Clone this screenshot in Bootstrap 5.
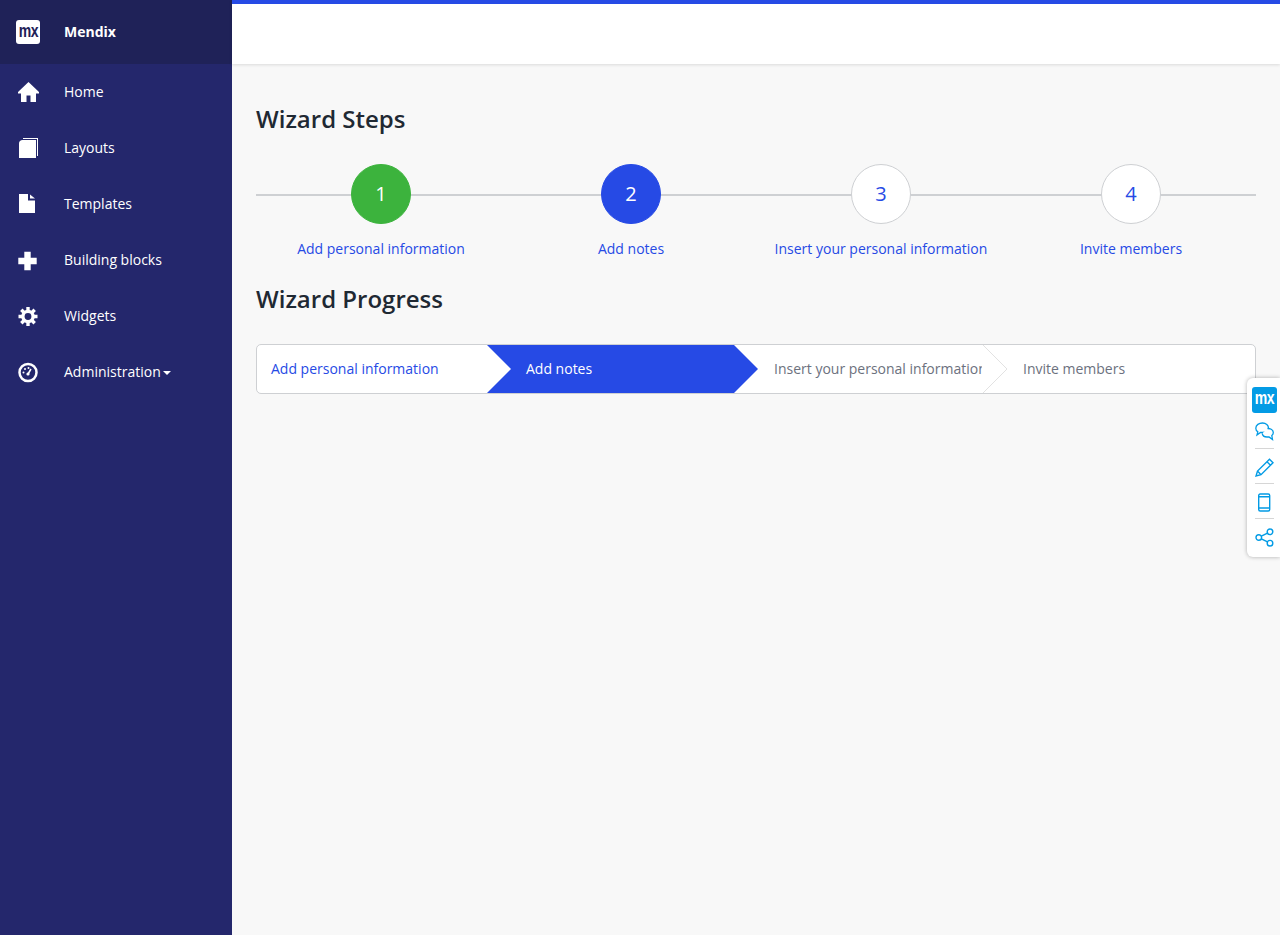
<!DOCTYPE html>
<html lang="en">
<head>
    <meta charset="UTF-8">
    <title>Wizard</title>
    <link href="https://cdn.jsdelivr.net/npm/bootstrap@5.3.0/dist/css/bootstrap.min.css" rel="stylesheet">
    <style>
        body {
            font-family: "Open Sans", sans-serif;
            font-size: 14px;
            color: #1f2933;
            background: #f8f8f8;
            height: 935px;
            overflow: hidden;
        }
        .app-shell { height: 935px; }
        .side-bar { width: 232px; background: #24276c; flex-shrink: 0; }
        .side-brand { height: 64px; background: #1f2258; font-weight: 700; }
        .side-item { height: 56px; color: #fff; text-decoration: none; }
        .side-brand, .side-item { padding-left: 16px; color: #fff; }
        .side-icon { width: 24px; margin-right: 24px; flex-shrink: 0; }
        .side-icon svg { display: block; }
        .side-text { margin-bottom: 2px; }
        .drop-caret {
            display: inline-block;
            margin-left: 2px;
            vertical-align: 2px;
            border-top: 4px solid #fff;
            border-left: 4px solid transparent;
            border-right: 4px solid transparent;
        }
        .top-bar { height: 64px; background: #fff; border-top: 4px solid #264ae5; box-shadow: 0 1px 3px rgba(0,0,0,.12); }
        .page-body { padding: 39px 24px 0; }
        .page-title { font-size: 24px; font-weight: 600; line-height: 32px; color: #1f2933; margin: 0; font-family: "Open Sans", sans-serif; }
        .step-wrap { margin-top: 29px; height: 119px; }
        .step-cell { width: 25%; position: relative; }
        .step-cell::before { content: ""; position: absolute; left: 0; right: 0; top: 30px; height: 2px; background: #ced0d3; }
        .step-dot {
            position: relative;
            width: 60px;
            height: 60px;
            font-size: 20px;
            background: #fff;
            color: #264ae5;
            border: 1px solid #ced0d3;
        }
        .step-dot.is-done { background: #3cb33d; border-color: #3cb33d; color: #fff; font-weight: 500; }
        .step-dot.is-current { background: #264ae5; border-color: #264ae5; color: #fff; font-weight: 500; }
        .step-label { margin-top: 14px; line-height: 22px; color: #264ae5; }
        .progress-strip {
            margin-top: 29px;
            height: 50px;
            background: #fff;
            border: 1px solid #ced0d3;
            border-radius: 5px;
        }
        .strip-item {
            position: relative;
            height: 48px;
            line-height: 48px;
            padding-left: 14px;
            color: #6c717e;
            white-space: nowrap;
        }
        .strip-first { width: 230px; color: #264ae5; }
        .strip-active { width: 247px; padding-left: 39px; background: #264ae5; color: #fff; }
        .strip-third { width: 249px; padding-left: 40px; }
        .strip-fourth { padding-left: 40px; flex: 1; }
        .strip-clip { display: block; overflow: hidden; width: 208px; }
        .strip-active::after {
            content: "";
            position: absolute;
            top: 0;
            right: -24px;
            border-left: 24px solid #264ae5;
            border-top: 24px solid transparent;
            border-bottom: 24px solid transparent;
        }
        .strip-active::before {
            content: "";
            position: absolute;
            top: 0;
            left: 0;
            border-left: 24px solid #fff;
            border-top: 24px solid transparent;
            border-bottom: 24px solid transparent;
        }
        .strip-tip { position: absolute; top: 0; left: 0; display: block; }
        .tool-dock {
            position: absolute;
            top: 378px;
            right: 0;
            width: 33px;
            height: 179px;
            background: #fff;
            border-radius: 6px 0 0 6px;
            box-shadow: 0 0 4px rgba(0,0,0,.3);
            padding-top: 9px;
        }
        .dock-logo {
            display: block;
            width: 25px;
            height: 26px;
            margin-left: 5px;
            background: #039be5;
            border-radius: 3px;
            overflow: hidden;
            text-align: center;
        }
        .mx-mark {
            display: inline-block;
            font-family: "Liberation Sans", sans-serif;
            font-weight: 700;
            font-size: 18px;
            letter-spacing: -.5px;
            line-height: 23px;
            transform: scaleX(.78);
        }
        .dock-logo .mx-mark { color: #fff; }
        .dock-btn { height: 35px; margin-left: 8px; width: 19px; padding-top: 2px; }
        .dock-btn + .dock-btn { border-top: 1px solid #d6d6d6; }
        .dock-btn svg { display: block; }
        .brand-logo {
            width: 24px;
            height: 24px;
            background: #fff;
            border-radius: 3px;
            overflow: hidden;
            text-align: center;
        }
        .brand-logo .mx-mark { color: #1f2258; }
    </style>
</head>
<body>
    <div class="app-shell d-flex position-relative">
        <nav class="side-bar d-flex flex-column">
            <div class="side-brand d-flex align-items-center">
                <span class="side-icon"><span class="brand-logo d-block"><span class="mx-mark">mx</span></span></span>
                <span class="side-text">Mendix</span>
            </div>
            <a class="side-item d-flex align-items-center" href="#">
                <span class="side-icon">
                    <svg width="24" height="24" viewBox="0 0 24 24" fill="#fff"><path d="M12.500 2 2 12v1.500h3V22h5.500v-6.500h4V22H20v-8.500h3V12z"/></svg>
                </span>
                <span class="side-text">Home</span>
            </a>
            <a class="side-item d-flex align-items-center" href="#">
                <span class="side-icon">
                    <svg width="24" height="24" viewBox="0 0 24 24" fill="#fff"><path d="M7 2h15v18h-1V3H7z"/><path d="M6.500 4H20v18H3V7.500C3 5.500 4.500 4 6.500 4z"/></svg>
                </span>
                <span class="side-text">Layouts</span>
            </a>
            <a class="side-item d-flex align-items-center" href="#">
                <span class="side-icon">
                    <svg width="24" height="24" viewBox="0 0 24 24" fill="#fff"><path d="M3 2h9v6.500h7V21H3z"/><path d="M14 2.500 19 6.500h-5z"/></svg>
                </span>
                <span class="side-text">Templates</span>
            </a>
            <a class="side-item d-flex align-items-center" href="#">
                <span class="side-icon">
                    <svg width="24" height="24" viewBox="0 0 24 24" fill="#fff"><path d="M8.300 3.800h6.400v6h6v6.400h-6v6h-6.400v-6h-6v-6.400h6z"/></svg>
                </span>
                <span class="side-text">Building blocks</span>
            </a>
            <a class="side-item d-flex align-items-center" href="#">
                <span class="side-icon">
                    <svg width="24" height="24" viewBox="0 0 24 24"><g stroke="#fff" stroke-width="3.400" transform="translate(0 .5)"><path d="M12 2.500v19M2.500 12h19M5.300 5.300l13.400 13.400M18.700 5.300 5.300 18.700"/></g><circle cx="12" cy="12.500" r="6.800" fill="#fff"/><circle cx="12" cy="12.500" r="3.400" fill="#24276c"/></svg>
                </span>
                <span class="side-text">Widgets</span>
            </a>
            <a class="side-item d-flex align-items-center" href="#">
                <span class="side-icon">
                    <svg width="24" height="24" viewBox="0 0 24 24"><circle cx="12" cy="12.500" r="8.500" fill="none" stroke="#fff" stroke-width="2.500"/><circle cx="12" cy="14" r="1.600" fill="#fff"/><path d="m12 14 3-5" stroke="#fff" stroke-width="1.500"/><circle cx="7.500" cy="12.500" r="1" fill="#fff"/><circle cx="9" cy="9" r="1" fill="#fff"/><circle cx="12.500" cy="8" r="1" fill="#fff"/></svg>
                </span>
                <span class="side-text">Administration<span class="drop-caret"></span></span>
            </a>
            <div class="flex-grow-1"></div>
        </nav>
        <main class="flex-grow-1">
            <div class="top-bar"></div>
            <div class="page-body">
                <h2 class="page-title">Wizard Steps</h2>
                <div class="step-wrap d-flex">
                    <div class="step-cell d-flex flex-column align-items-center">
                        <div class="step-dot is-done rounded-circle d-flex align-items-center justify-content-center">1</div>
                        <div class="step-label">Add personal information</div>
                    </div>
                    <div class="step-cell d-flex flex-column align-items-center">
                        <div class="step-dot is-current rounded-circle d-flex align-items-center justify-content-center">2</div>
                        <div class="step-label">Add notes</div>
                    </div>
                    <div class="step-cell d-flex flex-column align-items-center">
                        <div class="step-dot rounded-circle d-flex align-items-center justify-content-center">3</div>
                        <div class="step-label">Insert your personal information</div>
                    </div>
                    <div class="step-cell d-flex flex-column align-items-center">
                        <div class="step-dot rounded-circle d-flex align-items-center justify-content-center">4</div>
                        <div class="step-label">Invite members</div>
                    </div>
                </div>
                <h2 class="page-title">Wizard Progress</h2>
                <div class="progress-strip d-flex">
                    <div class="strip-item strip-first">Add personal information</div>
                    <div class="strip-item strip-active">Add notes</div>
                    <div class="strip-item strip-third">
                        <span class="strip-clip">Insert your personal information</span>
                    </div>
                    <div class="strip-item strip-fourth">
                        <svg class="strip-tip" width="25" height="48" viewBox="0 0 25 48"><path d="M0 0 24 24 0 48" fill="#fff" stroke="#e2e2e2"/></svg>
                        Invite members
                    </div>
                </div>
            </div>
        </main>
        <aside class="tool-dock">
            <span class="dock-logo"><span class="mx-mark">mx</span></span>
            <div class="dock-btn d-flex align-items-center">
                <svg width="19" height="19" viewBox="0 0 19 19" fill="none" stroke="#039be5" stroke-width="1.300"><path d="M7.500 1C4 1 .8 3 .8 6.200c0 1.600.9 2.800 2 3.600L2 13l3.500-2.500h2c3.500 0 6-1.800 6-4.500S11 1 7.500 1z"/><path d="M12.500 6.500c3 0 5.800 1.500 5.800 4 0 1.200-.6 2.300-1.500 3l.7 4-3.500-2.500h-2c-2.500 0-4.500-1.300-4.800-3.600" fill="#fff"/></svg>
            </div>
            <div class="dock-btn d-flex align-items-center">
                <svg width="19" height="19" viewBox="0 0 19 19" fill="none" stroke="#039be5" stroke-width="1.400"><path d="M14.500 1.200 18 4.700 6 16.700 1 18l1.500-5zM12 3.700 15.500 7.200M2.500 13 6 16.700"/></svg>
            </div>
            <div class="dock-btn d-flex align-items-center">
                <svg width="19" height="19" viewBox="0 0 19 19" fill="none" stroke="#039be5" stroke-width="1.400"><rect x="3.700" y="1" width="11" height="17" rx="1.500"/><path d="M3.700 3.800h11M3.700 15h11"/></svg>
            </div>
            <div class="dock-btn d-flex align-items-center">
                <svg width="19" height="19" viewBox="0 0 19 19" fill="none" stroke="#039be5" stroke-width="1.400"><circle cx="3.800" cy="9.500" r="2.800"/><circle cx="15" cy="3.800" r="2.800"/><circle cx="15" cy="15.200" r="2.800"/><path d="m6.300 8.200 6.200-3.100M6.300 10.800l6.200 3.100"/></svg>
            </div>
        </aside>
    </div>
    <script src="https://cdn.jsdelivr.net/npm/bootstrap@5.3.0/dist/js/bootstrap.bundle.min.js"></script>
</body>
</html>
